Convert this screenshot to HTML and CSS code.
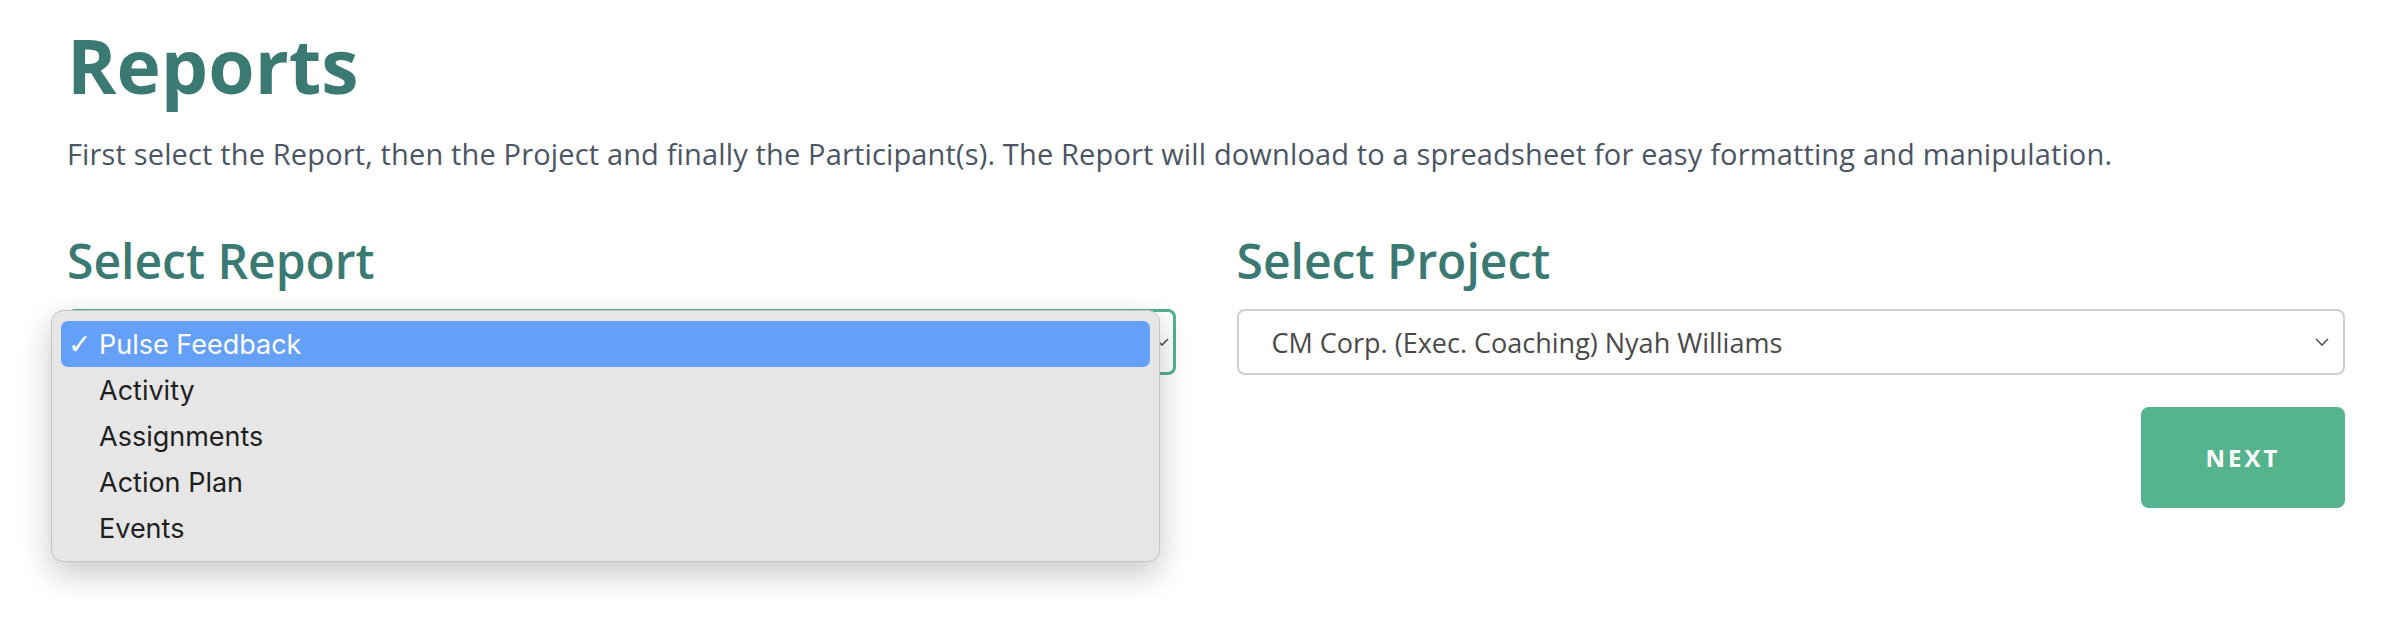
FILE: index.html
```html
<!DOCTYPE html>
<html lang="en">
<head>
    <meta charset="UTF-8">
    <meta name="viewport" content="width=device-width, initial-scale=1.0">
    <title>Reports</title>

    <link rel="stylesheet" href="styles.css">
</head>
<body>

    <main class="page">
        <h1 class="title">Reports</h1>
        <p class="intro">First select the Report, then the Project and finally the Participant(s). The Report will download to a spreadsheet for easy formatting and manipulation.</p>

        <div class="columns">
            <section class="field">
                <h2 class="field-label">Select Report</h2>
                <div class="picker picker-open">
                    <svg class="chevron" width="14" height="8" viewBox="0 0 14 8"><path d="M1 1l6 6 6-6" fill="none" stroke="#555" stroke-width="1.6"/></svg>

                    <!-- open native list -->
                    <ul class="menu">
                        <li class="menu-item selected"><span class="tick">&#10003;</span>Pulse Feedback</li>
                        <li class="menu-item"><span class="tick"></span>Activity</li>
                        <li class="menu-item"><span class="tick"></span>Assignments</li>
                        <li class="menu-item"><span class="tick"></span>Action Plan</li>
                        <li class="menu-item"><span class="tick"></span>Events</li>
                    </ul>
                </div>
            </section>

            <section class="field">
                <h2 class="field-label">Select Project</h2>
                <div class="picker">
                    <span class="picker-value">CM Corp. (Exec. Coaching) Nyah Williams</span>
                    <svg class="chevron" width="14" height="8" viewBox="0 0 14 8"><path d="M1 1l6 6 6-6" fill="none" stroke="#555" stroke-width="1.6"/></svg>
                </div>

                <div class="actions">
                    <button type="button" class="next-btn">NEXT</button>
                </div>
            </section>
        </div>
    </main>

</body>
</html>
```

FILE: styles.css
```css
body {
    margin: 0;
    min-height: 640px;
    background: #fff;
    font-family: "Open Sans", "Noto Sans", sans-serif;
}

.page {
    padding: 28px 45px 0 67px;
}

.title {
    margin: 0;
    font-size: 75px;
    line-height: 1;
    font-weight: 700;
    color: #3b7a72;
}

.intro {
    margin: 34px 0 0;
    font-size: 29px;
    line-height: 1.2;
    color: #4b5563;
    letter-spacing: 0.15px;
}

.columns {
    display: grid;
    grid-template-columns: 1fr 1fr;
    column-gap: 61px;
    margin-top: 60px;
}

.field-label {
    margin: 0 0 20px;
    font-size: 48px;
    line-height: 1.2;
    font-weight: 600;
    color: #3b7a72;
}

.picker {
    position: relative;
    display: flex;
    align-items: center;
    justify-content: space-between;
    box-sizing: border-box;
    height: 66px;
    padding: 0 14px 0 33px;
    border: 2px solid #cfcfcf;
    border-radius: 8px;
    background: #fff;
    font-size: 27px;
    color: #4a4a4a;
}

.picker-open {
    justify-content: flex-end;
    padding-right: 4px;
    border: 3px solid #52b38b;
}

.menu {
    position: absolute;
    top: -2px;
    left: -19px;
    width: 1109px;
    box-sizing: border-box;
    margin: 0;
    padding: 10px 9px;
    list-style: none;
    background: #e6e6e6;
    border: 1px solid #c4c4c4;
    border-radius: 12px;
    box-shadow: 0 12px 32px rgba(0, 0, 0, 0.22);
    font-family: Inter, "Liberation Sans", sans-serif;
    font-size: 27px;
    color: #1f1f1f;
}

.menu-item {
    display: flex;
    align-items: center;
    height: 46px;
    border-radius: 7px;
}

.menu-item.selected {
    background: #64a0f8;
    color: #fff;
}

.tick {
    width: 31px;
    padding-left: 7px;
    font-family: "DejaVu Sans", sans-serif;
    font-size: 28px;
}

.actions {
    display: flex;
    justify-content: flex-end;
    margin-top: 32px;
}

.next-btn {
    width: 204px;
    height: 101px;
    border: none;
    border-radius: 8px;
    background: #55b48e;
    color: #fff;
    font-family: "Open Sans", sans-serif;
    font-size: 24px;
    font-weight: 700;
    letter-spacing: 3px;
}
```
